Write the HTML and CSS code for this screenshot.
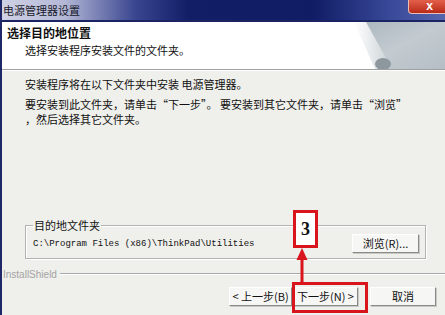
FILE: index.html
```html
<!DOCTYPE html>
<html lang="zh-CN">
<head>
    <meta charset="UTF-8">
    <meta name="viewport" content="width=device-width, initial-scale=1.0">
    <title>电源管理器设置</title>
    <link rel="stylesheet" href="styles.css">
</head>
<body>
    <div class="window">
        <header class="titlebar">
            <span class="title">电源管理器设置</span>
            <span class="close">x</span>
        </header>
        <section class="header">
            <div class="header-text">
                <h1>选择目的地位置</h1>
                <p>选择安装程序安装文件的文件夹。</p>
            </div>
            <svg class="header-art" width="92" height="47" viewBox="0 0 92 47">
                <defs>
                    <linearGradient id="bg" x1="0" y1="0" x2="1" y2="1">
                        <stop offset="0" stop-color="#a9b5bd"/>
                        <stop offset="0.5" stop-color="#c3cbd0"/>
                        <stop offset="1" stop-color="#b4bec4"/>
                    </linearGradient>
                    <linearGradient id="curl" x1="0" y1="0" x2="1" y2="0">
                        <stop offset="0" stop-color="#ffffff"/>
                        <stop offset="1" stop-color="#d0d6da"/>
                    </linearGradient>
                </defs>
                <polygon points="2,0 92,0 92,47 24,47" fill="url(#bg)"/>
                <path d="M1,0 L13,0 L34,38 Q32,47 22,47 Z" fill="url(#curl)"/>
                <ellipse cx="30" cy="42" rx="8" ry="6" fill="#8d979e"/>
            </svg>
        </section>
        <main class="content">
            <div class="intro">
                <p>安装程序将在以下文件夹中安装 电源管理器。</p>
                <p class="wide">要安装到此文件夹，请单击“下一步”。 要安装到其它文件夹，请单击“浏览”<br>，然后选择其它文件夹。</p>
            </div>
            <fieldset class="dest">
                <legend>目的地文件夹</legend>
                <div class="dest-row">
                    <span class="path">C:\Program Files (x86)\ThinkPad\Utilities</span>
                    <button class="btn browse">浏览(R)...</button>
                </div>
            </fieldset>
            <div class="brand">
                <span>InstallShield</span>
            </div>
            <div class="actions">
                <button class="btn back">&lt; 上一步(B)</button>
                <button class="btn next">下一步(N) &gt;</button>
                <button class="btn cancel">取消</button>
            </div>
        </main>

        <!-- 标注 -->
        <div class="mark-box"></div>
        <div class="mark-label">3</div>
        <svg class="mark-arrow" width="12" height="36" viewBox="0 0 12 36">
            <polygon points="6,0 0.5,12 11.5,12" fill="#d8141c"/>
            <rect x="4.5" y="10" width="3" height="26" fill="#d8141c"/>
        </svg>
    </div>
</body>
</html>
```

FILE: styles.css
```css
body {
    margin: 0;
    padding: 0;
    background: #efefeb;
    font-family: "Noto Sans CJK SC", "Liberation Sans", sans-serif;
    color: #111;
}

.window {
    position: relative;
    width: 443px;
    height: 315px;
    border-left: 2px solid #1e2868;
    display: flex;
    flex-direction: column;
    overflow: hidden;
    background: #efefeb;
}

.titlebar {
    height: 20px;
    border-bottom: 2px solid #1a2462;
    display: flex;
    align-items: flex-start;
    background: linear-gradient(to right, #cfd1e4 0%, #b4b8d6 14%, #3a4690 30%, #121e66 42%, #101c64 70%, #3a4a9a 88%, #5565ae 100%);
}

.title {
    font-size: 11px;
    line-height: 20px;
    padding-left: 1px;
    color: #1a1a2a;
}

.close {
    margin-left: auto;
    margin-right: -6px;
    width: 41px;
    height: 13px;
    border: 1px solid #e8c0b8;
    border-top: none;
    border-radius: 0 0 0 4px;
    background: linear-gradient(to bottom, #e4604a, #b82a18);
    color: #fff;
    font-family: "Liberation Sans", sans-serif;
    font-weight: bold;
    font-size: 12px;
    line-height: 12px;
    text-align: center;
}

.header {
    height: 47px;
    background: #fff;
    border-bottom: 1px solid #a0a0a0;
    display: flex;
}

.header-text {
    flex: 1;
    padding: 3px 0 0 5px;
}

.header h1 {
    margin: 0;
    font-size: 12px;
    line-height: 15px;
    font-weight: bold;
}

.header p {
    margin: 3px 0 0 18px;
    font-size: 11px;
    line-height: 15px;
}

.header-art {
    display: block;
}

.content {
    flex: 1;
    display: flex;
    flex-direction: column;
    border-top: 1px solid #fff;
}

.intro {
    padding: 6px 0 0 23px;
    font-size: 11px;
    line-height: 15px;
}

.intro p {
    margin: 0;
}

.intro .wide {
    margin-top: 5px;
    white-space: nowrap;
}

.dest {
    margin: auto 19px 0 23px;
    padding: 0 6px 5px 7px;
    border: 1px solid #b2b2ae;
    box-shadow: 1px 1px 0 #fff, inset 1px 1px 0 #fff;
}

.dest legend {
    padding: 0 1px;
    font-size: 11px;
    line-height: 12px;
}

.dest-row {
    display: flex;
    align-items: center;
    justify-content: space-between;
    padding-top: 3px;
}

.path {
    font-family: "Liberation Mono", monospace;
    font-size: 9px;
}

.btn {
    height: 19px;
    padding: 0;
    background: #f6f6f4;
    border: 1px solid #fff;
    border-right-color: #8a8a88;
    border-bottom-color: #8a8a88;
    box-shadow: 1px 1px 0 #c8c8c4;
    font-family: "Noto Sans CJK SC", "Liberation Sans", sans-serif;
    font-size: 11px;
    line-height: 17px;
    color: #111;
}

.browse {
    width: 67px;
}

.brand {
    margin: 9px 0 0 1px;
    height: 12px;
    display: flex;
    align-items: center;
}

.brand span {
    font-family: "Liberation Sans", sans-serif;
    font-size: 10px;
    color: #a4a4a4;
    padding-right: 3px;
}

.brand::after {
    content: "";
    flex: 1;
    border-top: 1px solid #a8a8a8;
    border-bottom: 1px solid #fff;
}

.actions {
    display: flex;
    justify-content: flex-end;
    margin: 7px 9px 9px 0;
}

.back {
    width: 63px;
}

.next {
    width: 65px;
    margin-left: 1px;
}

.cancel {
    width: 66px;
    margin-left: 12px;
}

.mark-box {
    position: absolute;
    left: 290px;
    top: 282px;
    width: 70px;
    height: 25px;
    border: 3px solid #d8141c;
}

.mark-label {
    position: absolute;
    left: 291px;
    top: 210px;
    width: 19px;
    height: 32px;
    border: 3px solid #d8141c;
    background: #fff;
    font-family: "Liberation Serif", serif;
    font-weight: bold;
    font-size: 18px;
    line-height: 32px;
    text-align: center;
}

.mark-arrow {
    position: absolute;
    left: 294px;
    top: 248px;
}
```
